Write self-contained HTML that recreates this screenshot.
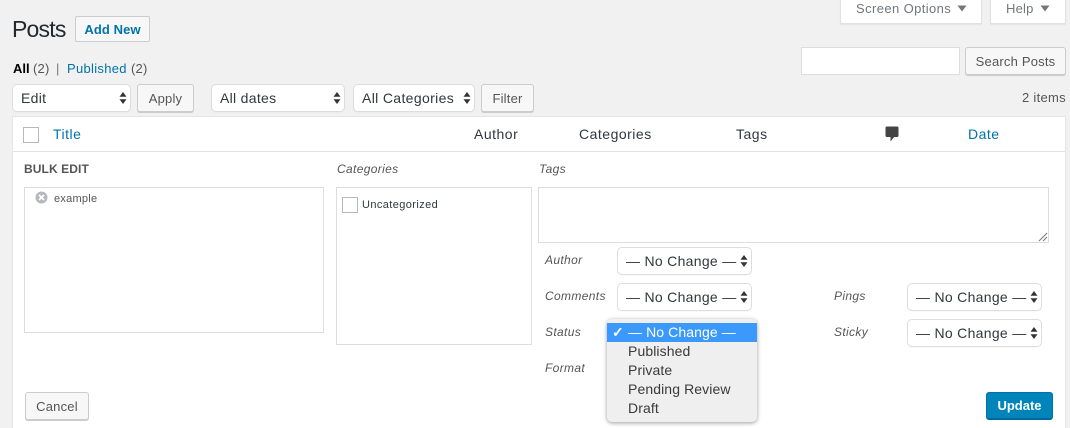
<!DOCTYPE html>
<html><head><meta charset="utf-8">
<style>
html,body{margin:0;padding:0;width:1070px;height:428px;overflow:hidden;background:#f1f1f1;font-family:"Liberation Sans",sans-serif;color:#444;}
*{box-sizing:border-box}
.a{position:absolute}
.t{position:absolute;white-space:nowrap;font-size:13px;line-height:18px;height:18px}
.btn{position:absolute;background:#f7f7f7;border:1px solid #ccc;border-radius:3px;box-shadow:0 1px 0 #ccc;color:#555;font-size:13px;text-align:center;white-space:nowrap;letter-spacing:.2px}
.sel{position:absolute;background:#fff;border:1px solid #ddd;border-radius:5px;color:#32373c;font-size:14px;white-space:nowrap;letter-spacing:.3px;padding-left:8px;box-shadow:0 1px 1px rgba(0,0,0,.03)}
.sel svg{position:absolute;right:3px;top:50%;margin-top:-6px}
.box{position:absolute;background:#fff;border:1px solid #ddd}
.i{font-style:italic;font-size:12px;color:#555;letter-spacing:.35px}
.h{font-size:14px;color:#32373c;letter-spacing:.5px}
.l{color:#0073aa}
.o{position:absolute;left:21px;font-size:14px;color:#3a3a3a;line-height:19px;height:19px;white-space:nowrap;letter-spacing:.1px}
</style></head><body>

<div class="a" style="left:840px;top:-2px;width:142px;height:26px;background:#fff;border:1px solid #e1e1e1;box-shadow:0 1px 1px rgba(0,0,0,.05)"></div>
<div class="t" style="left:856px;top:0px;color:#72777c;font-size:13px;letter-spacing:.4px">Screen Options</div>
<svg class="a" style="left:957px;top:5px" width="10" height="7"><path d="M0.5 0.5H9.5L5 6.5Z" fill="#72777c"/></svg>
<div class="a" style="left:990px;top:-2px;width:76px;height:26px;background:#fff;border:1px solid #e1e1e1;box-shadow:0 1px 1px rgba(0,0,0,.05)"></div>
<div class="t" style="left:1006px;top:0px;color:#72777c;letter-spacing:.2px">Help</div>
<svg class="a" style="left:1040px;top:5px" width="10" height="7"><path d="M0.5 0.5H9.5L5 6.5Z" fill="#72777c"/></svg>

<div class="t" style="left:12px;top:15px;font-size:23px;line-height:28px;height:28px;color:#23282d;letter-spacing:-.8px">Posts</div>
<div class="a" style="left:75px;top:16px;width:75px;height:26px;background:#f7f7f7;border:1px solid #ccc;border-radius:2px;color:#0073aa;font-weight:700;font-size:13px;line-height:25px;text-align:center;letter-spacing:.1px">Add New</div>

<div class="t" style="left:13px;top:60px;color:#000;font-weight:700;font-size:13px">All</div>
<div class="t" style="left:33px;top:60px;color:#555;letter-spacing:.2px">(2)</div>
<div class="t" style="left:56px;top:60px;color:#72777c">|</div>
<div class="t l" style="left:67px;top:60px;letter-spacing:.3px">Published</div>
<div class="t" style="left:131px;top:60px;color:#555;letter-spacing:.2px">(2)</div>

<div class="a" style="left:801px;top:47px;width:159px;height:28px;background:#fff;border:1px solid #ddd"></div>
<div class="btn" style="left:965px;top:47px;width:101px;height:28px;line-height:27px">Search Posts</div>

<div class="sel" style="left:12px;top:84px;width:119px;height:28px;line-height:27px">Edit<svg width="8" height="12"><path d="M4 0L7.5 4.7H.5ZM4 12L.5 7.3H7.5Z" fill="#333"/></svg></div>
<div class="btn" style="left:137px;top:84px;width:57px;height:28px;line-height:27px">Apply</div>
<div class="sel" style="left:211px;top:84px;width:134px;height:28px;line-height:27px">All dates<svg width="8" height="12"><path d="M4 0L7.5 4.7H.5ZM4 12L.5 7.3H7.5Z" fill="#333"/></svg></div>
<div class="sel" style="left:353px;top:84px;width:122px;height:28px;line-height:27px;letter-spacing:.35px">All Categories<svg width="8" height="12"><path d="M4 0L7.5 4.7H.5ZM4 12L.5 7.3H7.5Z" fill="#333"/></svg></div>
<div class="btn" style="left:481px;top:84px;width:53px;height:28px;line-height:27px">Filter</div>
<div class="t" style="right:4px;top:89px;color:#555;letter-spacing:.3px">2 items</div>

<div class="a" style="left:12px;top:116px;width:1054px;height:312px;background:#fff;border:1px solid #e5e5e5;border-bottom:0"></div>
<div class="a" style="left:13px;top:151px;width:1052px;height:1px;background:#e1e1e1"></div>

<div class="a" style="left:23px;top:127px;width:16px;height:16px;background:#fff;border:1px solid #b4b9be"></div>
<div class="t h l" style="left:53px;top:125px;color:#0073aa">Title</div>
<div class="t h" style="left:474px;top:125px">Author</div>
<div class="t h" style="left:579px;top:125px">Categories</div>
<div class="t h" style="left:736px;top:125px">Tags</div>
<svg class="a" style="left:885px;top:126px" width="14" height="16"><path d="M2 0.5H12Q13.5 .5 13.5 2V9.5Q13.5 11 12 11H9L5.5 15.5V11H2Q.5 11 .5 9.5V2Q.5 .5 2 .5Z" fill="#444"/></svg>
<div class="t h" style="left:968px;top:125px;color:#0073aa">Date</div>

<div class="t" style="left:24px;top:160px;font-size:12px;font-weight:700;color:#555;letter-spacing:.1px">BULK EDIT</div>
<div class="t i" style="left:337px;top:160px">Categories</div>
<div class="t i" style="left:539px;top:160px">Tags</div>

<div class="box" style="left:24px;top:187px;width:300px;height:146px"></div>
<svg class="a" style="left:35px;top:191px" width="13" height="13"><circle cx="6.5" cy="6.5" r="6" fill="#b4b9be"/><path d="M4 4L9 9M9 4L4 9" stroke="#fff" stroke-width="1.8"/></svg>
<div class="t" style="left:54px;top:190px;font-size:11px;color:#555;letter-spacing:.25px">example</div>

<div class="box" style="left:336px;top:187px;width:196px;height:158px"></div>
<div class="a" style="left:342px;top:197px;width:16px;height:16px;background:#fff;border:1px solid #b4b9be"></div>
<div class="t" style="left:362px;top:196px;font-size:11px;color:#32373c;letter-spacing:.4px">Uncategorized</div>

<div class="box" style="left:538px;top:187px;width:511px;height:56px"></div>
<svg class="a" style="left:1038px;top:232px" width="10" height="10"><path d="M1 9L9 1M5 9L9 5" stroke="#777" stroke-width="1"/></svg>

<div class="t i" style="left:545px;top:251px">Author</div>
<div class="t i" style="left:545px;top:287px">Comments</div>
<div class="t i" style="left:545px;top:323px">Status</div>
<div class="t i" style="left:545px;top:359px">Format</div>
<div class="t i" style="left:834px;top:287px">Pings</div>
<div class="t i" style="left:834px;top:323px">Sticky</div>

<div class="sel" style="left:617px;top:247px;width:135px;height:28px;line-height:27px">— No Change —<svg width="8" height="12"><path d="M4 0L7.5 4.7H.5ZM4 12L.5 7.3H7.5Z" fill="#333"/></svg></div>
<div class="sel" style="left:617px;top:283px;width:135px;height:28px;line-height:27px">— No Change —<svg width="8" height="12"><path d="M4 0L7.5 4.7H.5ZM4 12L.5 7.3H7.5Z" fill="#333"/></svg></div>
<div class="sel" style="left:907px;top:283px;width:135px;height:28px;line-height:27px">— No Change —<svg width="8" height="12"><path d="M4 0L7.5 4.7H.5ZM4 12L.5 7.3H7.5Z" fill="#333"/></svg></div>
<div class="sel" style="left:907px;top:319px;width:135px;height:28px;line-height:27px">— No Change —<svg width="8" height="12"><path d="M4 0L7.5 4.7H.5ZM4 12L.5 7.3H7.5Z" fill="#333"/></svg></div>

<div class="a" style="left:607px;top:319px;width:150px;height:103px;background:#efefef;border-radius:5px;box-shadow:0 1px 4px rgba(0,0,0,.4)">
  <div class="a" style="left:0;top:4px;width:150px;height:19px;background:#3b99fc"></div>
  <div class="o" style="left:5px;top:4px;color:#fff;font-size:14px;font-weight:700">✓</div>
  <div class="o" style="top:4px;color:#fff">— No Change —</div>
  <div class="o" style="top:23px">Published</div>
  <div class="o" style="top:42px">Private</div>
  <div class="o" style="top:61px">Pending Review</div>
  <div class="o" style="top:80px">Draft</div>
</div>

<div class="btn" style="left:25px;top:392px;width:64px;height:28px;line-height:27px">Cancel</div>
<div class="a" style="left:986px;top:392px;width:67px;height:28px;background:#0085ba;border:1px solid #0073aa;border-bottom:2px solid #006799;border-radius:3px;color:#fff;font-size:13px;font-weight:700;line-height:26px;text-align:center">Update</div>

</body></html>
